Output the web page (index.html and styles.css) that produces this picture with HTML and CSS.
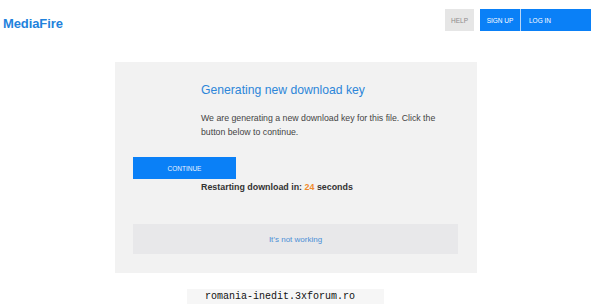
FILE: index.html
```html
<!DOCTYPE html>
<html>
<head>
<meta charset="utf-8">
<link rel="stylesheet" href="styles.css">
</head>
<body>
<header class="top">
  <div class="logo">MediaFire</div>
  <nav class="nav">
    <a class="btn help">HELP</a>
    <a class="btn blue signup">SIGN UP</a>
    <a class="btn blue login">LOG IN</a>
  </nav>
</header>
<main class="card">
  <h1 class="title">Generating new download key</h1>
  <p class="text">We are generating a new download key for this file. Click the button below to continue.</p>
  <a class="continue">CONTINUE</a>
  <p class="restart">Restarting download in: <span class="count">24</span> seconds</p>
  <div class="notworking">It’s not working</div>
</main>
<footer class="foot"><span class="forum">romania-inedit.3xforum.ro</span></footer>
</body>
</html>
```
FILE: styles.css
```css
* { box-sizing: border-box; }
html, body { margin: 0; padding: 0; background: #fff; }
body { font-family: "Liberation Sans", Arial, sans-serif; width: 592px; height: 304px; overflow: hidden; }

.top { display: flex; justify-content: space-between; align-items: flex-start; padding: 9px 1px 0 3px; height: 31px; }
.logo { font-weight: bold; font-size: 13px; color: #1f82dc; margin-top: 7px; letter-spacing: -0.1px; }
.nav { display: flex; align-items: stretch; }
.btn { display: flex; align-items: center; height: 22px; font-size: 6.5px; text-transform: uppercase; }
.help { background: #e6e6e6; color: #8c8c8c; width: 29px; justify-content: center; margin-right: 6px; }
.blue { background: #0a80f7; color: #fff; }
.signup { width: 41px; justify-content: center; border-right: 1px solid #b9d6f5; }
.login { width: 70px; padding-left: 8px; }

.card { width: 362px; height: 211px; margin: 31px auto 0; background: #f2f2f2; padding: 19px 18px 0; display: flex; flex-direction: column; align-items: flex-start; }
.title { margin: 1px 0 0 68px; font-weight: normal; font-size: 12.2px; line-height: 16px; color: #2d86d9; }
.text { margin: 13px 0 0 68px; font-size: 8.75px; line-height: 14px; color: #444; width: 240px; }
.continue { margin-top: 18px; width: 103px; height: 22px; background: #0a80f7; color: #e8f2fe; font-size: 6.5px; display: flex; align-items: center; justify-content: center; }
.restart { margin: 2px 0 0 68px; font-weight: bold; font-size: 8.9px; line-height: 12px; color: #333; }
.count { color: #f08a2c; }
.notworking { margin-top: 31px; width: 325px; height: 30px; background: #e8e8ea; color: #4a8fd6; font-size: 8px; display: flex; align-items: center; justify-content: center; }

.foot { margin-top: 16px; display: flex; justify-content: flex-start; padding-left: 187px; }
.forum { background: #f6f6f6; font-family: "Liberation Mono", "Courier New", monospace; font-size: 10px; line-height: 15px; padding: 0 29px 0 18px; width: 197px; color: #111; white-space: nowrap; }
```
